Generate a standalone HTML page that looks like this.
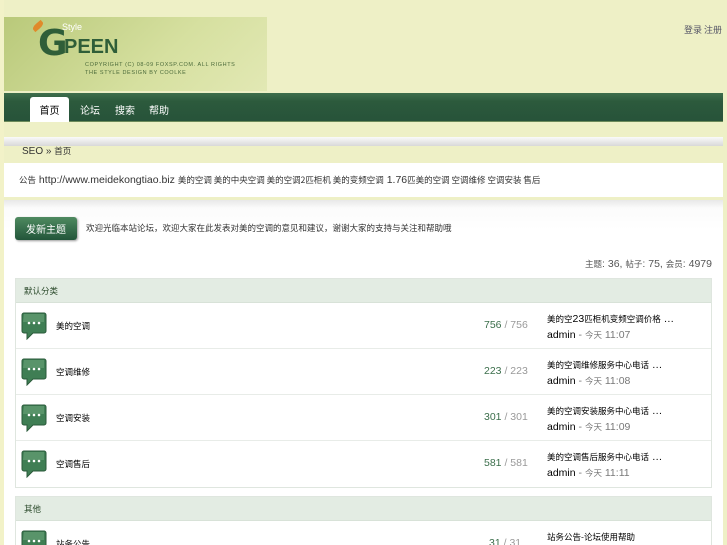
<!DOCTYPE html>
<html><head><meta charset="utf-8">
<style>
*{margin:0;padding:0;box-sizing:border-box}
html,body{width:727px;height:545px;overflow:hidden}
body{background:#eef0c6;font-family:"Liberation Sans","DejaVu Sans","Noto Sans CJK SC",sans-serif;font-size:10.5px;color:#000;position:relative;white-space:nowrap}
.a{position:absolute}
.c{font-family:"Noto Sans CJK SC",sans-serif;font-size:8.5px}
#logo{left:4px;top:17px;width:263px;height:74px;background:linear-gradient(135deg,#b9c97a,#d6e0a0 60%,#e2e8b4);overflow:hidden}
#nav{left:4px;top:93px;width:719px;height:29px;background:linear-gradient(#3e6e4c,#2c5a3c 30%,#27533a);border-bottom:1px solid #6c8a5a}
.tab{position:absolute;top:4px;height:25px;color:#fff;line-height:25px;text-align:center;font-family:"Noto Sans CJK SC",sans-serif;font-size:10px}
#band{left:4px;top:137px;width:719px;height:9px;background:linear-gradient(#fafafa,#d8d8d8)}
#ann{left:4px;top:163px;width:719px;height:34px;background:#fff;line-height:34px;padding-left:15px;color:#333;overflow:hidden}
#main{left:4px;top:200px;width:719px;height:345px;background:linear-gradient(#e8e8e8,#fbfbfb 8px,#fff 30px)}
#btn{left:15px;top:217px;width:62px;height:23px;background:linear-gradient(#4f8a60,#22553a);border-radius:3px;color:#fff;line-height:23px;text-align:center;box-shadow:1px 1px 2px #999}
.tbl{position:absolute;left:15px;width:697px;border:1px solid #dfe6df;background:#fff;overflow:hidden}
.th{height:24px;background:#e3ece3;line-height:24px;padding-left:8px;color:#2b4a2b;border-bottom:1px solid #d8e2d8}
.row{height:46px;border-bottom:1px solid #e8ece8;position:relative}
.row:last-child{border-bottom:none}
.ico{position:absolute;left:5px;top:9px}
.nm{position:absolute;left:40px;top:17px}
.ct{position:absolute;left:468px;top:16px;color:#999}
.ct b{font-weight:normal;color:#3b6e4b}
.lt{position:absolute;left:531px;top:8px;line-height:16px}
.lt i{font-style:normal;color:#777}
</style></head><body>
<div class="a" style="left:0;top:0;width:4px;height:545px;background:#f2f2c8"></div>
<div id="logo" class="a">
 <div class="a" style="left:28px;top:6px;width:12px;height:6px;background:#e08a2a;border-radius:50% 0;transform:rotate(-40deg)"></div>
 <div class="a" style="left:58px;top:5px;color:#fff;font-size:9px">Style</div>
 <div class="a" style="left:34px;top:6px;font-size:36px;font-weight:bold;color:#2f5e38;letter-spacing:-2px;font-family:'DejaVu Sans',sans-serif">G</div>
 <div class="a" style="left:60px;top:19px;font-size:20px;font-weight:bold;color:#2f5e38">PEEN</div>
 <div class="a" style="left:81px;top:44px;font-size:5.5px;color:#4b6a3a;letter-spacing:.6px;line-height:8px">COPYRIGHT (C) 08-09 FOXSP.COM. ALL RIGHTS<br>THE STYLE DESIGN BY COOLKE</div>
</div>
<div class="a c" style="left:684px;top:23px;color:#556;font-size:9px">登录</div>
<div class="a c" style="left:704px;top:23px;color:#556;font-size:9px">注册</div>
<div id="nav" class="a">
 <div class="tab" style="left:26px;width:39px;background:#fff;color:#000;border-radius:3px 3px 0 0">首页</div>
 <div class="tab" style="left:75px;width:22px">论坛</div>
 <div class="tab" style="left:110px;width:22px">搜索</div>
 <div class="tab" style="left:144px;width:22px">帮助</div>
</div>
<div id="band" class="a"></div>
<div class="a" style="left:22px;top:145px;color:#333;font-size:10px">SEO » <span class="c">首页</span></div>
<div id="ann" class="a"><span class="c">公告</span> http://www.meidekongtiao.biz <span class="c">美的空调 美的中央空调 美的空调2匹柜机 美的变频空调</span> 1.76<span class="c">匹美的空调 空调维修 空调安装 售后</span></div>
<div id="main" class="a"></div>
<div id="btn" class="a c" style="font-size:10px">发新主题</div>
<div class="a c" style="left:86px;top:222px;color:#333">欢迎光临本站论坛，欢迎大家在此发表对美的空调的意见和建议，谢谢大家的支持与关注和帮助哦</div>
<div class="a" style="right:15px;top:258px;color:#555;text-align:right"><span class="c">主题</span>: 36, <span class="c">帖子</span>: 75, <span class="c">会员</span>: 4979</div>

<svg width="0" height="0" style="position:absolute"><defs><symbol id="b" viewBox="0 0 26 28"><path d="M3 1h20a2 2 0 0 1 2 2v16a2 2 0 0 1-2 2H12l-6 6v-6H3a2 2 0 0 1-2-2V3a2 2 0 0 1 2-2z" fill="#3f7e54" stroke="#2a5a3a"/><path d="M3 2h20v8H2z" fill="#6aa37a" opacity=".6"/><circle cx="8" cy="11" r="1.3" fill="#fff"/><circle cx="13" cy="11" r="1.3" fill="#fff"/><circle cx="18" cy="11" r="1.3" fill="#fff"/></symbol></defs></svg>

<div class="tbl" style="top:278px">
 <div class="th c">默认分类</div>
 <div class="row"><svg class="ico" width="26" height="28"><use href="#b"/></svg><span class="nm c">美的空调</span><span class="ct"><b>756</b> / 756</span><div class="lt"><span class="c">美的空</span>23<span class="c">匹柜机变频空调价格</span> …<br>admin <i>- <span class="c">今天</span> 11:07</i></div></div>
 <div class="row"><svg class="ico" width="26" height="28"><use href="#b"/></svg><span class="nm c">空调维修</span><span class="ct"><b>223</b> / 223</span><div class="lt"><span class="c">美的空调维修服务中心电话</span> …<br>admin <i>- <span class="c">今天</span> 11:08</i></div></div>
 <div class="row"><svg class="ico" width="26" height="28"><use href="#b"/></svg><span class="nm c">空调安装</span><span class="ct"><b>301</b> / 301</span><div class="lt"><span class="c">美的空调安装服务中心电话</span> …<br>admin <i>- <span class="c">今天</span> 11:09</i></div></div>
 <div class="row"><svg class="ico" width="26" height="28"><use href="#b"/></svg><span class="nm c">空调售后</span><span class="ct"><b>581</b> / 581</span><div class="lt"><span class="c">美的空调售后服务中心电话</span> …<br>admin <i>- <span class="c">今天</span> 11:11</i></div></div>
</div>
<div class="tbl" style="top:496px;height:60px">
 <div class="th c">其他</div>
 <div class="row"><svg class="ico" width="26" height="28"><use href="#b"/></svg><span class="nm c">站务公告</span><span class="ct" style="left:473px"><b>31</b> / 31</span><div class="lt"><span class="c">站务公告-论坛使用帮助</span></div></div>
</div>
<div class="a" style="left:723px;top:0;width:4px;height:545px;background:#eef0c6"></div>
</body></html>
